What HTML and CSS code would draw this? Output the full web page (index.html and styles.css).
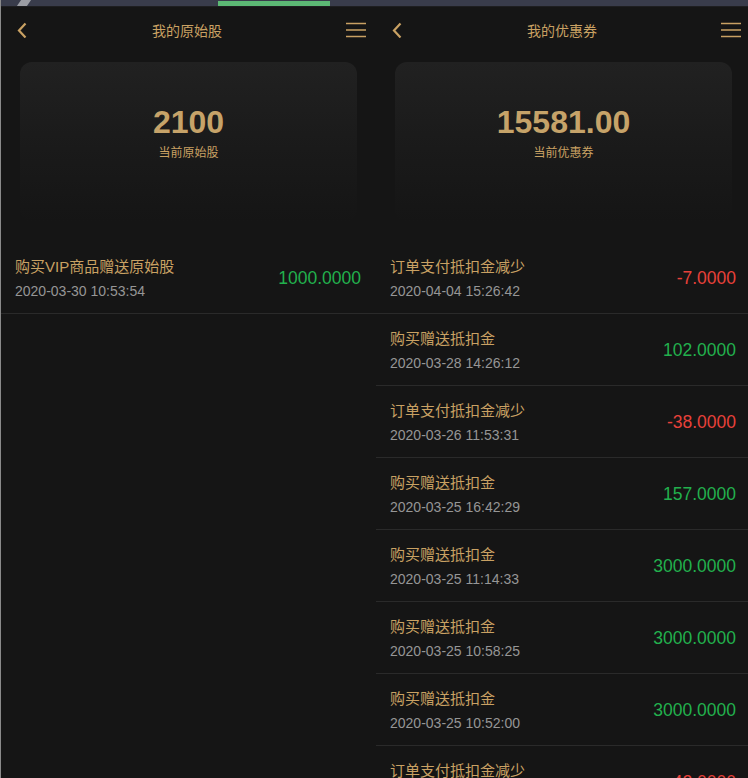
FILE: index.html
```html
<!DOCTYPE html>
<html lang="zh-CN">

<head>
    <meta charset="UTF-8">
    <meta name="viewport" content="width=device-width, initial-scale=1.0">
    <title>我的原始股 / 我的优惠券</title>
    <link rel="stylesheet" href="styles.css">
</head>

<body>
    <div class="topbar">
        <span class="topbar-stripe"></span>
        <span class="topbar-progress"></span>
    </div>

    <div class="screens">
        <!-- 我的原始股 -->
        <div class="screen">
            <div class="header">
                <svg class="icon-back" width="12" height="16" viewBox="0 0 12 16">
                    <path d="M9.5 1.5 L3 8.5 L9.5 15.5" fill="none" stroke="#c9a163" stroke-width="2.2" />
                </svg>
                <span class="header-title">我的原始股</span>
                <svg class="icon-menu" width="20" height="16" viewBox="0 0 20 16">
                    <path d="M0 1.5 H20 M0 8 H20 M0 14.5 H20" stroke="#c9a163" stroke-width="1.4" />
                </svg>
            </div>
            <div class="summary">
                <div class="summary-value">2100</div>
                <div class="summary-label">当前原始股</div>
            </div>
            <ul class="records">
                <li class="record">
                    <div class="record-info">
                        <div class="record-title">购买VIP商品赠送原始股</div>
                        <div class="record-date">2020-03-30 10:53:54</div>
                    </div>
                    <div class="record-amount plus">1000.0000</div>
                </li>
            </ul>
        </div>

        <!-- 我的优惠券 -->
        <div class="screen">
            <div class="header">
                <svg class="icon-back" width="12" height="16" viewBox="0 0 12 16">
                    <path d="M9.5 1.5 L3 8.5 L9.5 15.5" fill="none" stroke="#c9a163" stroke-width="2.2" />
                </svg>
                <span class="header-title">我的优惠券</span>
                <svg class="icon-menu" width="20" height="16" viewBox="0 0 20 16">
                    <path d="M0 1.5 H20 M0 8 H20 M0 14.5 H20" stroke="#c9a163" stroke-width="1.4" />
                </svg>
            </div>
            <div class="summary">
                <div class="summary-value">15581.00</div>
                <div class="summary-label">当前优惠券</div>
            </div>
            <ul class="records">
                <li class="record">
                    <div class="record-info">
                        <div class="record-title">订单支付抵扣金减少</div>
                        <div class="record-date">2020-04-04 15:26:42</div>
                    </div>
                    <div class="record-amount minus">-7.0000</div>
                </li>
                <li class="record">
                    <div class="record-info">
                        <div class="record-title">购买赠送抵扣金</div>
                        <div class="record-date">2020-03-28 14:26:12</div>
                    </div>
                    <div class="record-amount plus">102.0000</div>
                </li>
                <li class="record">
                    <div class="record-info">
                        <div class="record-title">订单支付抵扣金减少</div>
                        <div class="record-date">2020-03-26 11:53:31</div>
                    </div>
                    <div class="record-amount minus">-38.0000</div>
                </li>
                <li class="record">
                    <div class="record-info">
                        <div class="record-title">购买赠送抵扣金</div>
                        <div class="record-date">2020-03-25 16:42:29</div>
                    </div>
                    <div class="record-amount plus">157.0000</div>
                </li>
                <li class="record">
                    <div class="record-info">
                        <div class="record-title">购买赠送抵扣金</div>
                        <div class="record-date">2020-03-25 11:14:33</div>
                    </div>
                    <div class="record-amount plus">3000.0000</div>
                </li>
                <li class="record">
                    <div class="record-info">
                        <div class="record-title">购买赠送抵扣金</div>
                        <div class="record-date">2020-03-25 10:58:25</div>
                    </div>
                    <div class="record-amount plus">3000.0000</div>
                </li>
                <li class="record">
                    <div class="record-info">
                        <div class="record-title">购买赠送抵扣金</div>
                        <div class="record-date">2020-03-25 10:52:00</div>
                    </div>
                    <div class="record-amount plus">3000.0000</div>
                </li>
                <li class="record">
                    <div class="record-info">
                        <div class="record-title">订单支付抵扣金减少</div>
                        <div class="record-date">2020-03-24 18:20:16</div>
                    </div>
                    <div class="record-amount minus">-42.0000</div>
                </li>
            </ul>
        </div>
    </div>
</body>

</html>
```

FILE: styles.css
```css
body {
    margin: 0;
    height: 100vh;
    overflow: hidden;
    background-color: #151515;
    font-family: 'Liberation Sans', 'Noto Sans CJK SC', sans-serif;
    border-left: 1px solid #8a8a8a;
    box-sizing: border-box;
}

.topbar {
    height: 6px;
    background-color: #393c4b;
    display: flex;
    align-items: flex-end;
    overflow: hidden;
}

.topbar-stripe {
    width: 10px;
    height: 6px;
    margin-left: 18px;
    background-color: #9b9da4;
    transform: skewX(-35deg);
}

.topbar-progress {
    width: 112px;
    height: 5px;
    margin-left: 189px;
    background-color: #5cb874;
}

.screens {
    display: flex;
}

.screen {
    width: 375px;
    flex-shrink: 0;
    overflow: hidden;
}

.header {
    height: 48px;
    display: flex;
    align-items: center;
    justify-content: space-between;
    padding: 0 10px 2px 15px;
    border-top: 1px solid #1e1e20;
    box-sizing: border-box;
}

.icon-back {
    display: block;
    width: 12px;
    height: 16px;
}

.icon-menu {
    display: block;
    width: 20px;
    height: 16px;
}

.header-title {
    color: #c9a163;
    font-size: 14px;
}

.summary {
    height: 160px;
    margin: 8px 19px 20px;
    padding-top: 40px;
    box-sizing: border-box;
    border-radius: 12px;
    background: linear-gradient(to bottom, #212121 0%, #1b1b1b 45%, #151515 100%);
    text-align: center;
}

.summary-value {
    color: #c6a369;
    font-size: 32px;
    font-weight: bold;
    line-height: 40px;
}

.summary-label {
    color: #c9a163;
    font-size: 12px;
    line-height: 22px;
}

.records {
    margin: 0;
    padding: 0;
    list-style: none;
}

.record {
    height: 72px;
    box-sizing: border-box;
    display: flex;
    align-items: center;
    justify-content: space-between;
    padding: 0 15px 0 14px;
    border-bottom: 1px solid #2a2a2a;
}

.record-info {
    align-self: flex-start;
    padding-top: 15px;
}

.record-title {
    color: #c9a163;
    font-size: 15px;
    line-height: 20px;
}

.record-date {
    margin-top: 4px;
    color: #969696;
    font-size: 14px;
    line-height: 20px;
}

.record-amount {
    font-size: 17.5px;
    margin-top: 1px;
}

.record-amount.plus {
    color: #22b04d;
}

.record-amount.minus {
    color: #e8413a;
}
```
